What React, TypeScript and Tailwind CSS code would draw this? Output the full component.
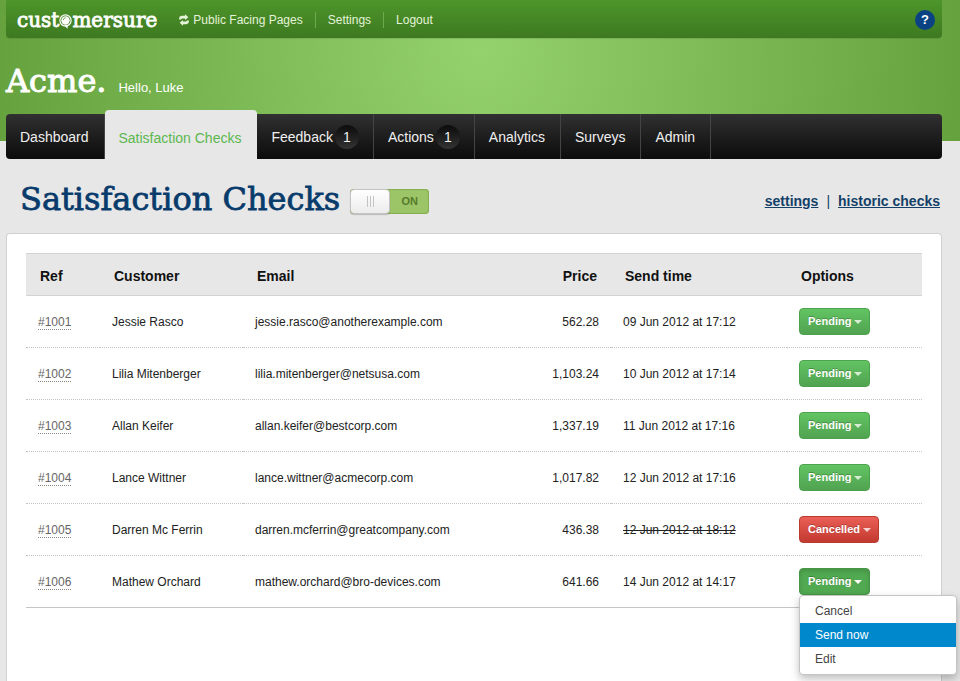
import { useState } from "react";
import clsx from "clsx";

type Check = {
  ref: string;
  customer: string;
  email: string;
  price: string;
  sendTime: string;
  status: "Pending" | "Cancelled";
};

const checks: Check[] = [
  { ref: "#1001", customer: "Jessie Rasco", email: "jessie.rasco@anotherexample.com", price: "562.28", sendTime: "09 Jun 2012 at 17:12", status: "Pending" },
  { ref: "#1002", customer: "Lilia Mitenberger", email: "lilia.mitenberger@netsusa.com", price: "1,103.24", sendTime: "10 Jun 2012 at 17:14", status: "Pending" },
  { ref: "#1003", customer: "Allan Keifer", email: "allan.keifer@bestcorp.com", price: "1,337.19", sendTime: "11 Jun 2012 at 17:16", status: "Pending" },
  { ref: "#1004", customer: "Lance Wittner", email: "lance.wittner@acmecorp.com", price: "1,017.82", sendTime: "12 Jun 2012 at 17:16", status: "Pending" },
  { ref: "#1005", customer: "Darren Mc Ferrin", email: "darren.mcferrin@greatcompany.com", price: "436.38", sendTime: "12 Jun 2012 at 18:12", status: "Cancelled" },
  { ref: "#1006", customer: "Mathew Orchard", email: "mathew.orchard@bro-devices.com", price: "641.66", sendTime: "14 Jun 2012 at 14:17", status: "Pending" },
];

const tabs = [
  { label: "Dashboard" },
  { label: "Satisfaction Checks", active: true },
  { label: "Feedback", count: 1 },
  { label: "Actions", count: 1 },
  { label: "Analytics" },
  { label: "Surveys" },
  { label: "Admin" },
];

const slab = "font-['DejaVu_Serif',serif]";

function Logo() {
  return (
    <a href="#" aria-label="customersure" className={clsx(slab, "flex items-center text-[20px] leading-6 text-white [-webkit-text-stroke:0.8px_white]")}>
      <span>cust</span>
      <svg viewBox="0 0 13 18" className="h-[18px] w-[13px]" aria-hidden="true">
        <circle cx="6.500" cy="9.500" r="5.600" fill="none" stroke="#fff" strokeWidth="1.200" />
        <circle cx="6.500" cy="9.500" r="4.200" fill="#fff" />
        <path d="M5.500 14.500l3 3.300.4-4z" fill="#fff" />
        <path d="M4.300 9a2.500 2.500 0 0 1 2.300-2.200" fill="none" stroke="#4c8c2c" strokeWidth=".8" />
      </svg>
      <span>mersure</span>
    </a>
  );
}

function SwapIcon() {
  return (
    <svg viewBox="0 0 10 12" className="h-3 w-[10px]" fill="currentColor" aria-hidden="true">
      <path d="M0 5.400C0 2.800 1.300 1.800 3 1.800h3V.2l3.400 3L6 6V4.500H3.600c-.9 0-1.300.2-1.500.9z" />
      <path d="M10 6.600c0 2.600-1.300 3.600-3 3.600H4v1.600l-3.400-3L4 6v1.500h2.400c.9 0 1.300-.2 1.500-.9z" />
    </svg>
  );
}

function TopBar() {
  return (
    <div className="flex h-[38px] items-center rounded-b bg-linear-to-b from-[#4d962a] to-[#3e7921] pl-[11px] pr-[7px] pt-[2px] shadow-[0_1px_1px_rgba(0,0,0,0.1)]">
      <Logo />
      <nav className="ml-[10px] flex items-center text-xs text-[#e4f3d9]">
        <a href="#" className="flex items-center gap-1 px-3">
          <SwapIcon />
          Public Facing Pages
        </a>
        <a href="#" className="border-l border-[#6fab4c] px-3">Settings</a>
        <a href="#" className="border-l border-[#6fab4c] px-3">Logout</a>
      </nav>
      <button type="button" aria-label="Help" className="ml-auto flex size-5 items-center justify-center rounded-full bg-[#0a4283] text-[13px] font-bold text-white">
        ?
      </button>
    </div>
  );
}

function Tabs() {
  return (
    <nav className="flex h-[45px] rounded bg-linear-to-b from-[#313131] to-[#0c0c0c] text-sm text-[#f0f0f0]">
      {tabs.map((tab) => (
        <a
          key={tab.label}
          href="#"
          className={clsx(
            "flex items-center border-r pl-[14px]",
            tab.active ? "-mt-1 rounded-t border-[#e7e7e7] bg-[#e7e7e7] pt-[6px] text-[#5cb84f]" : "border-[#444]",
            tab.count ? "pr-[14px]" : "pr-[15px]"
          )}
        >
          {tab.label}
          {tab.count && (
            <span className="ml-[2px] flex size-6 items-center justify-center rounded-full bg-linear-to-b from-[#0c0c0c] to-[#343434]">
              {tab.count}
            </span>
          )}
        </a>
      ))}
    </nav>
  );
}

function Toggle() {
  const [on, setOn] = useState(true);
  return (
    <label className="flex h-[25px] w-[79px] cursor-pointer rounded-sm bg-[#9bc566] shadow-[inset_0_0_1px_1px_#84ad52]">
      <input type="checkbox" className="sr-only" checked={on} onChange={() => setOn(!on)} aria-label="Satisfaction checks" />
      <span className="flex w-10 items-center justify-center gap-[2px] rounded-sm border border-[#c4c4c4] bg-linear-to-b from-white to-[#ececec] shadow-[0_1px_1px_rgba(0,0,0,0.2)]">
        <span className="h-[11px] w-px bg-[#c4c4c4]" />
        <span className="h-[11px] w-px bg-[#c4c4c4]" />
        <span className="h-[11px] w-px bg-[#c4c4c4]" />
      </span>
      <span className="flex flex-1 items-center justify-center text-[11px] font-bold text-[#567a2c]">{on ? "ON" : "OFF"}</span>
    </label>
  );
}

function StatusButton({ status, open, onClick }: { status: Check["status"]; open: boolean; onClick: () => void }) {
  return (
    <button
      type="button"
      aria-haspopup="menu"
      aria-expanded={open}
      onClick={onClick}
      className={clsx(
        "flex h-[27px] items-center gap-[3px] rounded border pl-2 pr-[7px] text-[11px] font-bold text-white [text-shadow:0_-1px_0_rgba(0,0,0,0.25)]",
        status === "Cancelled" && "border-[#b83a31] bg-linear-to-b from-[#ea5f56] to-[#c2392f]",
        status === "Pending" && !open && "border-[#4da24d] bg-linear-to-b from-[#62c462] to-[#51a351]",
        status === "Pending" && open && "border-[#479647] bg-[#51a951] shadow-[inset_0_2px_4px_rgba(0,0,0,0.15)]"
      )}
    >
      {status}
      <span className={clsx("border-x-4 border-t-4 border-x-transparent", open ? "border-t-white" : "border-t-white/75")} />
    </button>
  );
}

function OptionsMenu() {
  return (
    <div role="menu" className="absolute left-0 top-full z-10 flex w-[158px] flex-col rounded border border-[#c4c4c4] bg-white py-[3px] text-xs text-[#444] shadow-[0_4px_9px_rgba(0,0,0,0.25)]">
      <button type="button" role="menuitem" className="h-6 px-[15px] text-left">Cancel</button>
      <button type="button" role="menuitem" className="h-6 bg-[#0088cc] px-[15px] text-left text-white">Send now</button>
      <button type="button" role="menuitem" className="h-6 px-[15px] text-left">Edit</button>
    </div>
  );
}

function ChecksTable() {
  const [openRef, setOpenRef] = useState("#1006");
  const th = "border-y border-[#d2d2d2] px-[14px] pt-[2px]";

  return (
    <table className="w-full table-fixed border-separate border-spacing-0 text-left text-xs text-[#222]">
      <colgroup>
        <col className="w-[74px]" />
        <col className="w-[143px]" />
        <col />
        <col className="w-[92px]" />
        <col className="w-[176px]" />
        <col className="w-[135px]" />
      </colgroup>
      <thead>
        <tr className="h-[43px] bg-[#e7e7e7] text-sm text-[#111]">
          <th className={th}>Ref</th>
          <th className={th}>Customer</th>
          <th className={th}>Email</th>
          <th className={clsx(th, "text-right")}>Price</th>
          <th className={th}>Send time</th>
          <th className={th}>Options</th>
        </tr>
      </thead>
      <tbody className="[&_td]:border-b [&_td]:border-dotted [&_td]:border-[#c4c4c4] [&_td]:px-3 [&>tr:last-child>td]:border-solid">
        {checks.map((check) => (
          <tr key={check.ref} className="h-[52px]">
            <td>
              <a href="#" className="border-b border-dotted border-[#888] text-[#666]">{check.ref}</a>
            </td>
            <td>{check.customer}</td>
            <td>{check.email}</td>
            <td className="text-right">{check.price}</td>
            <td className={clsx(check.status === "Cancelled" && "line-through")}>{check.sendTime}</td>
            <td>
              <div className="relative w-fit">
                <StatusButton
                  status={check.status}
                  open={openRef === check.ref}
                  onClick={() => setOpenRef(openRef === check.ref ? "" : check.ref)}
                />
                {openRef === check.ref && <OptionsMenu />}
              </div>
            </td>
          </tr>
        ))}
      </tbody>
    </table>
  );
}

export default function App() {
  return (
    <div className="flex min-h-screen flex-col bg-[#e7e7e7] bg-[radial-gradient(circle_at_50%_50px,#94d26d_0,#64a13c_500px)] bg-[length:100%_141px] bg-no-repeat pl-[6px] pr-[18px] font-['Liberation_Sans',Arial,sans-serif]">
      <TopBar />
      <header className="flex h-[76px] items-baseline gap-3 pt-[21px] text-white">
        <h1 className={clsx(slab, "text-[32px] leading-[44px] [-webkit-text-stroke:1px_white]")}>Acme.</h1>
        <p className="text-[13px]">Hello, Luke</p>
      </header>
      <Tabs />
      <main className="flex flex-1 flex-col">
        <div className="flex h-[74px] items-center pl-[14px] pr-[2px] pt-[10px]">
          <h2 className={clsx(slab, "pb-1 text-[32px] leading-10 text-[#073b6b] [-webkit-text-stroke:0.8px_#073b6b]")}>Satisfaction Checks</h2>
          <div className="ml-[10px]">
            <Toggle />
          </div>
          <div className="ml-auto flex gap-2 text-sm font-bold text-[#133f68]">
            <a href="#" className="underline">settings</a>
            <span className="font-normal">|</span>
            <a href="#" className="underline">historic checks</a>
          </div>
        </div>
        <section className="flex-1 rounded-t border border-b-0 border-[#d0d0d0] bg-white px-[19px] pt-[19px]">
          <ChecksTable />
        </section>
      </main>
    </div>
  );
}
